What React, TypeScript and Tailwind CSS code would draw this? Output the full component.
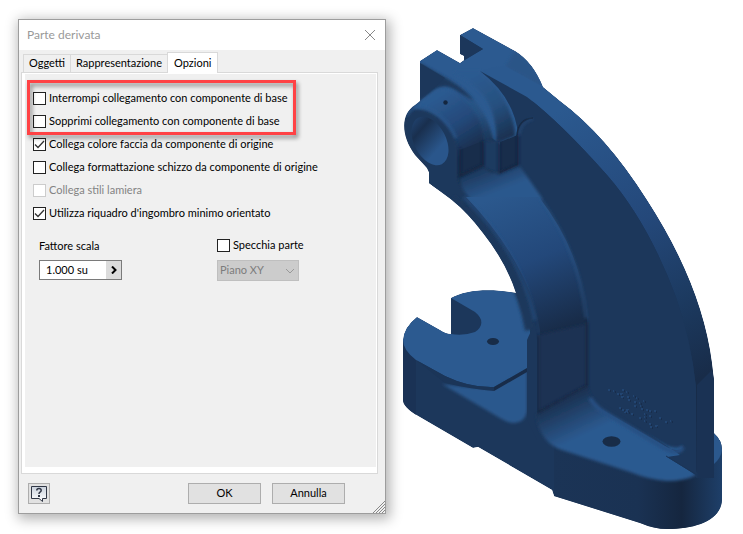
import { useState } from "react";
import { clsx } from "clsx";

const TABS = ["Oggetti", "Rappresentazione", "Opzioni"];

function Check({ label, defaultChecked = false, disabled = false }: { label: string; defaultChecked?: boolean; disabled?: boolean }) {
  return (
    <label className={clsx("flex h-[13px] items-center gap-[3px] whitespace-nowrap", disabled && "text-[#838383]")}>
      <span className="grid shrink-0">
        <input
          type="checkbox"
          defaultChecked={defaultChecked}
          disabled={disabled}
          className="peer col-start-1 row-start-1 size-[13px] appearance-none border border-[#222] bg-white disabled:border-[#ccc]"
        />
        <svg viewBox="0 0 13 13" className="pointer-events-none invisible col-start-1 row-start-1 size-[13px] peer-checked:visible">
          <path d="M2 6.5 5 9.5 11 3" fill="none" stroke="#333" strokeWidth="1.3" />
        </svg>
      </span>
      {label}
    </label>
  );
}

function HelpIcon() {
  return (
    <svg viewBox="0 0 18 18" className="size-[18px]">
      <defs>
        <linearGradient id="bubble" x1="0" y1="0" x2="0" y2="1">
          <stop offset="0" stopColor="#c9d1dc" />
          <stop offset="1" stopColor="#fff" />
        </linearGradient>
      </defs>
      <path d="M1.5 1.5h15v12h-4v3l-3.500-3h-7.500z" fill="url(#bubble)" stroke="#303746" />
      <path d="M6.800 5.500q0-2 2.200-2t2.200 1.800q0 1.200-1.200 1.900-1 .6-1 1.800" fill="none" stroke="#303746" strokeWidth="1.500" />
      <rect x="8" y="10" width="2" height="2" fill="#303746" />
    </svg>
  );
}

function Dialog() {
  const [tab, setTab] = useState("Opzioni");

  return (
    <section
      aria-label="Parte derivata"
      className="relative mt-[19px] flex w-[368px] shrink-0 flex-col border border-[#9d9d9d] bg-[#f0f0f0] shadow-[2px_3px_12px_2px_rgba(0,0,0,0.3)]"
    >
      <header className="flex h-[30px] items-center justify-between bg-white pr-[9px] pl-2">
        <h1 className="text-[12px] text-[#999]">Parte derivata</h1>
        <button aria-label="Chiudi">
          <svg viewBox="0 0 12 12" className="size-3">
            <path d="M1 1 11 11M11 1 1 11" stroke="#888" fill="none" />
          </svg>
        </button>
      </header>

      <div role="tablist" className="flex items-end px-1 pt-[2px]">
        {TABS.map((name) => (
          <button
            key={name}
            role="tab"
            aria-selected={tab === name}
            onClick={() => setTab(name)}
            className={clsx(
              "border border-b-0 border-[#d9d9d9]",
              tab === name ? "relative -mb-px h-[21px] bg-white px-[6px]" : "-mr-px h-[18px] px-[5px]",
            )}
          >
            {name}
          </button>
        ))}
      </div>

      <div role="tabpanel" className="mr-[7px] ml-[2px] border border-[#d9d9d9] bg-white pt-px pr-px pb-[6px] pl-[3px]">
        <div className="h-[393px] bg-[#f0f0f0] pt-[6px] pl-[2px]">
          <div className="relative flex w-[269px] flex-col gap-[10px] px-[6px] pt-[12px] pb-[7px]">
            <div className="pointer-events-none absolute inset-0 border-3 border-[#ff4245] drop-shadow-[2px_3px_2px_rgba(0,0,0,0.45)]" />
            <Check label="Interrompi collegamento con componente di base" />
            <Check label="Sopprimi collegamento con componente di base" />
          </div>
          <div className="flex flex-col gap-[10px] px-[6px] pt-[3px]">
            <Check label="Collega colore faccia da componente di origine" defaultChecked />
            <Check label="Collega formattazione schizzo da componente di origine" />
            <Check label="Collega stili lamiera" disabled />
            <Check label="Utilizza riquadro d'ingombro minimo orientato" defaultChecked />
          </div>
          <div className="grid grid-cols-[178px_1fr] items-start gap-y-[8px] pt-[19px] pl-[12px]">
            <label htmlFor="scale" className="leading-[13px]">Fattore scala</label>
            <Check label="Specchia parte" />
            <div className="flex h-5 w-[83px] border border-[#7a7a7a] bg-white">
              <input id="scale" defaultValue="1.000 su" className="w-0 grow pl-[6px]" />
              <button aria-label="Altro" className="grid w-[15px] place-items-center bg-[#dcdcdc]">
                <svg viewBox="0 0 8 8" className="size-2">
                  <path d="M2 .5 5.500 4 2 7.500" fill="none" stroke="#000" strokeWidth="2" />
                </svg>
              </button>
            </div>
            <div className="relative w-[82px]">
              <select disabled aria-label="Piano" className="h-[21px] w-full appearance-none border border-[#bfbfbf] bg-[#ccc] pl-[2px] text-[#7c7c7c] opacity-100">
                <option>Piano XY</option>
              </select>
              <svg viewBox="0 0 10 6" className="pointer-events-none absolute top-2 right-1 h-[6px] w-[10px]">
                <path d="M1 1 5 5 9 1" fill="none" stroke="#999" />
              </svg>
            </div>
          </div>
        </div>
      </div>

      <footer className="flex items-center gap-[11px] pt-[9px] pr-10 pb-[9px] pl-[9px]">
        <button aria-label="Guida" className="mr-auto grid h-[21px] w-[22px] place-items-center border border-[#adadad] bg-[#e1e1e1]">
          <HelpIcon />
        </button>
        <button className="h-[21px] w-[73px] border border-[#adadad] bg-[#e1e1e1]">OK</button>
        <button className="h-[21px] w-[73px] border border-[#adadad] bg-[#e1e1e1]">Annulla</button>
      </footer>
      <svg viewBox="0 0 12 12" className="absolute right-0 bottom-0 size-3">
        <path d="M0 12 12 0M3 12 12 3M6 12 12 6M9 12 12 9" stroke="#888" fill="none" />
      </svg>
    </section>
  );
}

const BODY =
  "M420 61 437 50 460 63 464 60V56L460 54V35L473 28 515 51Q533 62 543 87L560 101Q606 135 647 200 702 285 712 363L714 380V433Q722 440 722 450V500C721 520 697 529 667 529Q654 529 640 523L570 501 554 496 552 490 478 447 473 448 418 416Q403 407 403 400V340Q404 327 417 317L440 330Q446 334 451 334V298C465 290 490 288 516 293Q506 262 483 233 468 213 452 200L429 183V172L427 168 415 155C401 136 400 114 415 105L420 101Z";

// Lettering embossed on the rib, too small to read
const ENGRAVING = [
  "M608 390h2m3 1h1m3 3h2m3-4h2m-4 4h3m3-2h1m0 5h2m-8 0h3m4 3h2m3-4h1m2 2h1m-3 4h2m3 1h1m-6 3h2m4 0h1m2-5h1m-3 8h2m3 1h2m-4 4h1m4-3h2m3 0h2m-7 5h2m8 2h2m4 4h2m3-1h1",
  "M619 408h2m1 2h2m2 0h3m-5 2h4m3 2h2m6 4h2m3-1h1m-1 4h1m4 3h2m-1 3h2m3-1h3",
];

function Bracket() {
  return (
    <svg viewBox="402 24 322 506" className="mt-6 ml-4 w-[322px] shrink-0 self-start" role="img" aria-label="Staffa">
      <defs>
        <linearGradient id="rim" gradientUnits="userSpaceOnUse" x1="560" y1="110" x2="705" y2="375">
          <stop offset="0" stopColor="#2b598f" />
          <stop offset=".45" stopColor="#24487a" />
          <stop offset=".75" stopColor="#1c3a60" />
          <stop offset="1" stopColor="#182c49" />
        </linearGradient>
        <linearGradient id="web" gradientUnits="userSpaceOnUse" x1="500" y1="195" x2="555" y2="330">
          <stop offset="0" stopColor="#2b588d" />
          <stop offset=".5" stopColor="#23487a" />
          <stop offset="1" stopColor="#182c49" />
        </linearGradient>
        <linearGradient id="foot" gradientUnits="userSpaceOnUse" x1="560" y1="395" x2="580" y2="437">
          <stop offset="0" stopColor="#182c49" />
          <stop offset="1" stopColor="#2c5a90" />
        </linearGradient>
        <linearGradient id="lug" gradientUnits="userSpaceOnUse" x1="465" y1="80" x2="502" y2="145">
          <stop offset="0" stopColor="#2c5a90" />
          <stop offset=".5" stopColor="#26507f" />
          <stop offset="1" stopColor="#182d4b" />
        </linearGradient>
        <linearGradient id="boss" gradientUnits="userSpaceOnUse" x1="440" y1="96" x2="474" y2="150">
          <stop offset="0" stopColor="#2c5a90" />
          <stop offset=".5" stopColor="#24497a" />
          <stop offset="1" stopColor="#182d4b" />
        </linearGradient>
        <linearGradient id="bore" gradientUnits="userSpaceOnUse" x1="418" y1="119" x2="436" y2="164">
          <stop offset="0" stopColor="#1f3f69" />
          <stop offset=".22" stopColor="#192f4e" />
          <stop offset=".75" stopColor="#2a568b" />
        </linearGradient>
        <linearGradient id="side" gradientUnits="userSpaceOnUse" x1="554" y1="0" x2="722" y2="0">
          <stop offset="0" stopColor="#1b3456" />
          <stop offset=".5" stopColor="#1a3253" />
          <stop offset=".76" stopColor="#15263f" />
          <stop offset="1" stopColor="#1e3f69" />
        </linearGradient>
        <linearGradient id="fall" gradientUnits="userSpaceOnUse" x1="476" y1="168" x2="487" y2="196">
          <stop offset="0" stopColor="#1b3558" />
          <stop offset="1" stopColor="#2b588d" />
        </linearGradient>
        <filter id="soft" x="-20%" y="-20%" width="140%" height="140%">
          <feGaussianBlur stdDeviation="1.500" />
        </filter>
        <clipPath id="body">
          <path d={BODY} />
        </clipPath>
      </defs>

      <g clipPath="url(#body)">
        <path d={BODY} fill="#1c375b" />

        {/* base sides */}
        <path d="M554 440H722V530H554Z" fill="url(#side)" />
        <path d="M403 340H416V420H403Z" fill="#1a3255" />

        {/* rear foot with slot */}
        <path d="M403 340Q404 327 417 317L440 330Q446 334 451 334V298C465 290 490 288 516 293L530 330V367L494 387Q470 388 445 376L416 360Q403 350 403 340Z" fill="#2c5a90" />
        <path d="M451 298 475 312C484 319 483 327 475 332Q464 336 451 334Z" fill="#1c375b" />
        <ellipse cx="493" cy="341.500" rx="6" ry="3.500" fill="#182c47" />
        <path d="M442 384Q470 388 494 389L527 369V410Q526 422 514 423 508 423 500 418Z" fill="#2b588d" filter="url(#soft)" />
        <path d="M416 360 445 376Q470 388 494 387V391Q470 389 445 383Z" fill="#1b3558" />
        <path d="M494 387 527 368V372L494 391Z" fill="#182c49" />

        {/* top of the lugs and the curved rim */}
        <path d="M420 61 437 50 460 63 483 49 460 35 473 28 515 51Q533 62 543 87L530 105 517 135 500 145 460 110 420 66Z" fill="#2c5a90" />
        <path d="M515 51Q533 62 543 87L505 67Z" fill="#295487" filter="url(#soft)" />
        <path d="M460 35 483 49 464 60V56L460 54Z" fill="#1c375b" />
        <path d="M480 71Q492 66 505 66L543 87 560 101Q606 135 647 200 702 285 712 363L714 380V478H696L696 387Q691 340 676 297 648 222 607 175 560 122 527 97Z" fill="url(#rim)" />
        <path d="M697 385 712 370 714 380V478H696Z" fill="#1a3254" />
        <path d="M714 433Q722 440 722 450 721 458 714 464Z" fill="#2b588d" />

        {/* front lug and boss */}
        <path d="M420 66 450 80Q472 93 484 114 498 140 498 180L430 190 420 110Z" fill="url(#lug)" filter="url(#soft)" />
        <path d="M455 71 480 71Q503 91 510 113 515 125 515 136L496 144Q498 117 484 96 472 82 455 74Z" fill="url(#lug)" filter="url(#soft)" />
        <path d="M420 63 448 79Q466 90 474 101L457 91Q446 83 436 89L430 94 420 101Z" fill="#1c375b" filter="url(#soft)" />
        <path d="M420 63 445 78 430 92 420 101Z" fill="#1c375b" />
        <path d="M412 107 430 94Q444 82 458 95 484 115 484 142V165L458 175 440 125Z" fill="url(#boss)" filter="url(#soft)" />
        <path d="M404 135C403 106 420 103 438 117Q455 131 458 150V178Q462 194 476 206L452 203 427 185V170L410 150Z" fill="#1c375b" filter="url(#soft)" />
        <path d="M407 116Q411 105 425 108 445 114 456 138" fill="none" stroke="#2b588d" strokeWidth="2" filter="url(#soft)" />
        <ellipse cx="430" cy="141" rx="16" ry="26" transform="rotate(-27 430 141)" fill="url(#bore)" />
        <circle cx="445.500" cy="102.500" r="2.200" fill="#14263f" />

        {/* rib face */}
        <path d="M480 71 527 97Q560 122 607 175 648 222 676 297 691 340 696 387V475L667 457 600 415 587 387V320Q582 260 540 200L518 170V134Q514 97 480 71Z" fill="#1c375b" />
        <path d="M517 136Q518 119 533 118" fill="none" stroke="#15263f" strokeWidth="1.500" />
        <path d="M519 136Q521 121 533 119" fill="none" stroke="#254c7a" strokeWidth="1.500" filter="url(#soft)" />

        {/* curved web running down from the lugs */}
        <path d="M484 142 500 140V174L484 168Z" fill="#1c3a60" filter="url(#soft)" />
        <path d="M459 178 483 166 490 172 500 173 519 165 542 198 540 204H476Q461 192 459 178Z" fill="url(#fall)" filter="url(#soft)" />
        <path d="M466 197H539Q583 254 587 320V388L540 415V330Q529 263 466 197Z" fill="url(#web)" />
        <path d="M452 200Q515 250 530 330" fill="none" stroke="#1c375b" strokeWidth="10" filter="url(#soft)" />
        <path d="M464 197Q521 252 535 320" fill="none" stroke="#285387" strokeOpacity=".5" strokeWidth="4" filter="url(#soft)" />
        <path d="M541 199Q580 254 586 318" fill="none" stroke="#295588" strokeOpacity=".5" strokeWidth="3" filter="url(#soft)" />
        <path d="M460 150 483 141V165L460 176Z" fill="#182d4b" />
        <path d="M500 142 518 135V165L500 173Z" fill="#182d4b" />
        <path d="M460 148V176L483 165V141M499 142V173L518 165V135" fill="none" stroke="#14243d" strokeWidth="1.500" filter="url(#soft)" />
        <path d="M539 335 587 324V387L539 413Z" fill="#1a3052" filter="url(#soft)" />
        <path d="M538 335V413L587 386V322" fill="none" stroke="#14253f" strokeWidth="2" filter="url(#soft)" />
        <path d="M527 340 535 322 537 340V440L527 420Z" fill="#1c375b" />

        {/* floor of the front foot */}
        <path d="M536 415 540 413 587 386Q590 400 603 410L667 446Q680 450 683 445L680 457 696 475Q685 481 667 481 650 480 630 472L562 450Q540 443 536 415Z" fill="url(#foot)" filter="url(#soft)" />
        <path d="M588 392Q593 405 605 411L665 446Q679 454 684 446V440L696 440V475L667 457 680 455Z" fill="#1c375b" />
        <path d="M590 398Q596 408 607 414L664 448Q678 456 683 447" fill="none" stroke="#275083" strokeWidth="4" filter="url(#soft)" />
        <ellipse cx="611.500" cy="441.500" rx="9" ry="5.200" fill="#182c47" />
        <path d="M666 456 697 475" stroke="#1b3558" />
        {ENGRAVING.map((d) => (
          <g key={d} fill="none">
            <path d={d} stroke="#285489" />
            <path d={d} stroke="#14253f" transform="translate(2 1)" strokeDasharray="1 2" />
          </g>
        ))}
      </g>
    </svg>
  );
}

export default function App() {
  return (
    <main className="flex min-h-screen items-start overflow-hidden bg-white pl-[18px] font-[Lato,'Open_Sans',sans-serif] text-[11px] text-black">
      <Dialog />
      <Bracket />
    </main>
  );
}
